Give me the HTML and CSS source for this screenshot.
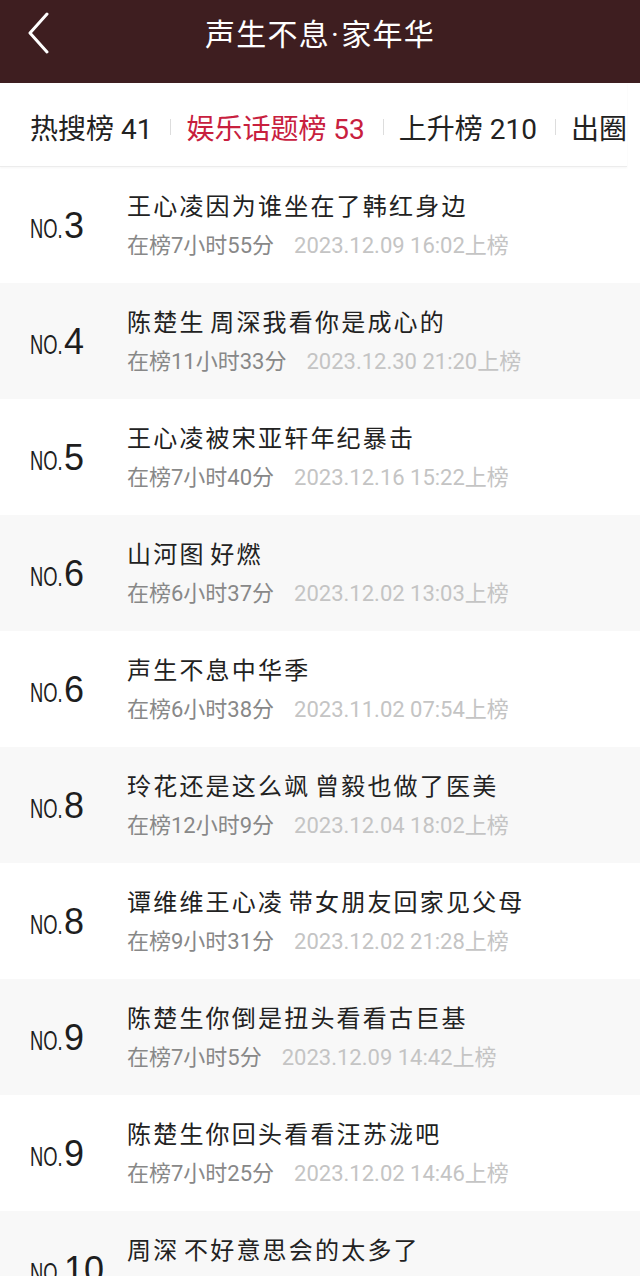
FILE: index.html
```html
<!DOCTYPE html>
<html lang="zh-CN">
<head>
<meta charset="utf-8">
<title>声生不息·家年华</title>
<link rel="stylesheet" href="styles.css">
</head>
<body>
<div class="page">
  <header class="topbar">
    <svg class="back" width="24" height="42" viewBox="0 0 24 42" aria-hidden="true">
      <path d="M20 2 L3 21 L20 40" fill="none" stroke="#fff" stroke-width="3" stroke-linecap="round" stroke-linejoin="round"/>
    </svg>
    <h1 class="title">声生不息<span class="dot">·</span>家年华</h1>
  </header>

  <nav class="tabs">
    <div class="tabs-inner">
      <span class="tab">热搜榜 41</span>
      <span class="sep"></span>
      <span class="tab active">娱乐话题榜 53</span>
      <span class="sep"></span>
      <span class="tab">上升榜 210</span>
      <span class="sep"></span>
      <span class="tab">出圈榜</span>
    </div>
  </nav>

  <ul class="list">
    <li class="row">
      <div class="rank"><span class="no">NO.</span><span class="num">3</span></div>
      <div class="info">
        <div class="topic">王心凌因为谁坐在了韩红身边</div>
        <div class="meta"><span class="dur">在榜7小时55分</span><span class="date">2023.12.09 16:02上榜</span></div>
      </div>
    </li>
    <li class="row alt">
      <div class="rank"><span class="no">NO.</span><span class="num">4</span></div>
      <div class="info">
        <div class="topic">陈楚生 周深我看你是成心的</div>
        <div class="meta"><span class="dur">在榜11小时33分</span><span class="date">2023.12.30 21:20上榜</span></div>
      </div>
    </li>
    <li class="row">
      <div class="rank"><span class="no">NO.</span><span class="num">5</span></div>
      <div class="info">
        <div class="topic">王心凌被宋亚轩年纪暴击</div>
        <div class="meta"><span class="dur">在榜7小时40分</span><span class="date">2023.12.16 15:22上榜</span></div>
      </div>
    </li>
    <li class="row alt">
      <div class="rank"><span class="no">NO.</span><span class="num">6</span></div>
      <div class="info">
        <div class="topic">山河图 好燃</div>
        <div class="meta"><span class="dur">在榜6小时37分</span><span class="date">2023.12.02 13:03上榜</span></div>
      </div>
    </li>
    <li class="row">
      <div class="rank"><span class="no">NO.</span><span class="num">6</span></div>
      <div class="info">
        <div class="topic">声生不息中华季</div>
        <div class="meta"><span class="dur">在榜6小时38分</span><span class="date">2023.11.02 07:54上榜</span></div>
      </div>
    </li>
    <li class="row alt">
      <div class="rank"><span class="no">NO.</span><span class="num">8</span></div>
      <div class="info">
        <div class="topic">玲花还是这么飒 曾毅也做了医美</div>
        <div class="meta"><span class="dur">在榜12小时9分</span><span class="date">2023.12.04 18:02上榜</span></div>
      </div>
    </li>
    <li class="row">
      <div class="rank"><span class="no">NO.</span><span class="num">8</span></div>
      <div class="info">
        <div class="topic">谭维维王心凌 带女朋友回家见父母</div>
        <div class="meta"><span class="dur">在榜9小时31分</span><span class="date">2023.12.02 21:28上榜</span></div>
      </div>
    </li>
    <li class="row alt">
      <div class="rank"><span class="no">NO.</span><span class="num">9</span></div>
      <div class="info">
        <div class="topic">陈楚生你倒是扭头看看古巨基</div>
        <div class="meta"><span class="dur">在榜7小时5分</span><span class="date">2023.12.09 14:42上榜</span></div>
      </div>
    </li>
    <li class="row">
      <div class="rank"><span class="no">NO.</span><span class="num">9</span></div>
      <div class="info">
        <div class="topic">陈楚生你回头看看汪苏泷吧</div>
        <div class="meta"><span class="dur">在榜7小时25分</span><span class="date">2023.12.02 14:46上榜</span></div>
      </div>
    </li>
    <li class="row alt">
      <div class="rank"><span class="no">NO.</span><span class="num">10</span></div>
      <div class="info">
        <div class="topic">周深 不好意思会的太多了</div>
        <div class="meta"><span class="dur">在榜6小时12分</span><span class="date">2023.12.02 20:15上榜</span></div>
      </div>
    </li>
  </ul>
</div>
</body>
</html>
```

FILE: styles.css
```css
* { box-sizing: border-box; }
html, body { margin: 0; padding: 0; }
body {
  background: #ffffff;
  font-family: Roboto, "Noto Sans CJK SC", sans-serif;
  color: #222222;
}
.page {
  width: 640px;
  height: 1276px;
  overflow: hidden;
}
.topbar {
  height: 83px;
  background: #3e1e20;
  display: flex;
  align-items: center;
  justify-content: center;
  position: relative;
}
.back {
  position: absolute;
  left: 27px;
  top: 12px;
}
.title {
  margin: 0;
  margin-top: -20px;
  color: #ffffff;
  font-size: 30px;
  font-weight: 400;
  letter-spacing: 1.3px;
  font-family: "Noto Sans CJK SC", sans-serif;
}
.title .dot {
  font-family: Roboto, sans-serif;
  margin: 0 1px;
}
.tabs {
  height: 84px;
  border-bottom: 1px solid #ececec;
  box-shadow: 0 1px 2px rgba(0,0,0,0.04);
  padding-left: 30px;
  overflow: hidden;
  display: flex;
  align-items: center;
  width: 627px;
}
.tabs-inner {
  display: flex;
  align-items: center;
  white-space: nowrap;
  margin-top: 4px;
}
.tab {
  font-size: 28px;
  color: #222222;
}
.tab.active { color: #c8203e; }
.sep {
  width: 1px;
  height: 16px;
  background: #dddddd;
  margin: 0 15px 0 18px;
}
.list {
  list-style: none;
  margin: 0;
  padding: 0;
}
.row {
  height: 116px;
  display: flex;
  align-items: center;
}
.row.alt { background: #f8f8f8; }
.rank {
  width: 127px;
  padding-left: 30px;
  display: flex;
  align-items: baseline;
  color: #1e1e1e;
  font-family: "Liberation Sans", sans-serif;
  margin-top: 2px;
}
.no {
  display: inline-block;
  font-size: 27px;
  transform: scaleX(0.68);
  transform-origin: left center;
  margin-right: -14px;
}
.num {
  font-size: 36px;
  line-height: 40px;
}
.info {
  display: flex;
  flex-direction: column;
  margin-top: -1px;
}
.topic {
  font-family: "Noto Sans CJK SC", sans-serif;
  font-size: 24px;
  letter-spacing: 2.2px;
  word-spacing: -3px;
  color: #222222;
  line-height: 34px;
}
.meta {
  margin-top: 9px;
  font-size: 22px;
  line-height: 30px;
  display: flex;
}
.dur { color: #888888; }
.date { color: #c4c4c4; margin-left: 20px; }
```
